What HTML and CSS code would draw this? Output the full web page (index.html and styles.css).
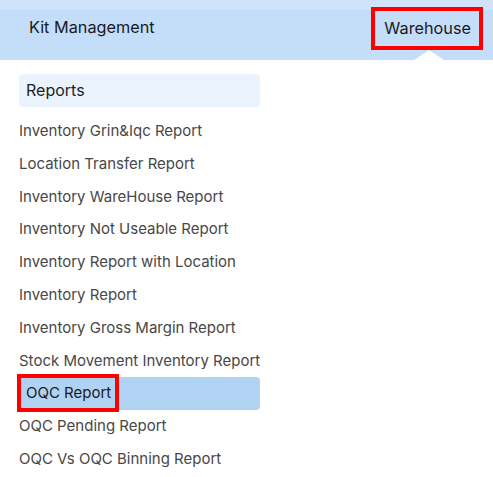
FILE: index.html
```html
<!DOCTYPE html>
<html>
<head>
<meta charset="utf-8">
<link rel="stylesheet" href="styles.css">
</head>
<body>
<header class="topbar">
  <div class="topbar-band"></div>
  <div class="topbar-main">
    <span class="nav-item">Kit Management</span>
    <span class="nav-item nav-active">Warehouse</span>
  </div>
</header>
<nav class="menu">
  <div class="menu-title">Reports</div>
  <ul class="menu-list">
    <li class="menu-item">Inventory Grin&amp;Iqc Report</li>
    <li class="menu-item">Location Transfer Report</li>
    <li class="menu-item">Inventory WareHouse Report</li>
    <li class="menu-item">Inventory Not Useable Report</li>
    <li class="menu-item">Inventory Report with Location</li>
    <li class="menu-item">Inventory Report</li>
    <li class="menu-item">Inventory Gross Margin Report</li>
    <li class="menu-item">Stock Movement Inventory Report</li>
    <li class="menu-item menu-item-active"><span class="hl">OQC Report</span></li>
    <li class="menu-item">OQC Pending Report</li>
    <li class="menu-item">OQC Vs OQC Binning Report</li>
  </ul>
</nav>
</body>
</html>
```
FILE: styles.css
```css
* { box-sizing: border-box; }
html, body { margin: 0; padding: 0; background: #fff; }
body { font-family: Inter, "Noto Sans", sans-serif; color: #222; }

.topbar { height: 60px; background: #c4ddf9; }
.topbar-band { height: 10px; background: #cfe4fb; }
.topbar-main {
  height: 50px;
  display: flex;
  justify-content: space-between;
  align-items: flex-start;
  padding: 0 10px 0 29px;
}
.nav-item { font-size: 16.25px; line-height: 34px; color: #1a1a1a; }
.nav-active {
  position: relative;
  border: 4px solid #f00;
  padding: 0 8px 0 9px;
  margin-top: -3px;
  line-height: 35px;
}
.nav-active::after {
  content: "";
  position: absolute;
  left: 39px;
  top: 39px;
  width: 0; height: 0;
  border-left: 15px solid transparent;
  border-right: 15px solid transparent;
  border-bottom: 10px solid #fff;
}

.menu { padding: 14px 0 0 19px; width: 260px; }
.menu-title {
  height: 33px;
  background: #eaf3fe;
  border-radius: 4px;
  padding-left: 7px;
  font-size: 16px;
  line-height: 33px;
  color: #1e1e1e;
}
.menu-list { list-style: none; margin: 8px 0 0; padding: 0; }
.menu-item {
  height: 32.8px;
  line-height: 32.8px;
  font-size: 15px;
  color: #474747;
  white-space: nowrap;
}
.menu-item-active {
  background: #b0d2f3;
  border-radius: 4px;
  color: #1a1a1a;
}
.hl {
  display: inline-block;
  position: relative;
  left: -2px;
  top: -3px;
  border: 4px solid #f00;
  padding: 0 4px 0 5px;
  height: 38px;
  line-height: 30px;
}
```
